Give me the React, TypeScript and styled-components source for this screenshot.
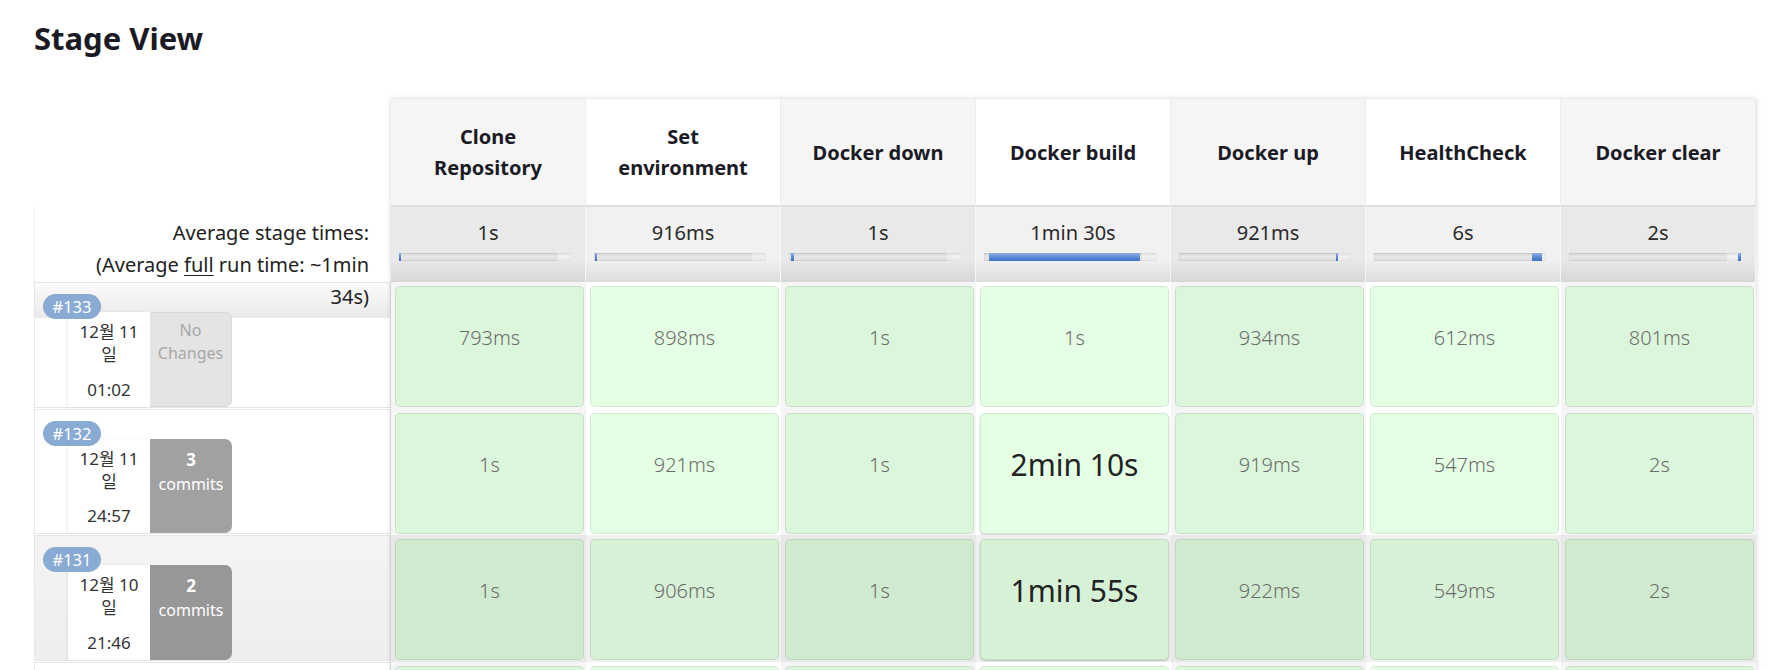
import React from "react";
import styled, { createGlobalStyle, css } from "styled-components";

const GlobalStyle = createGlobalStyle`
  html, body {
    margin: 0;
    padding: 0;
    overflow: hidden;
    background: #fff;
  }
  body {
    font-family: "Noto Sans", "Noto Sans CJK KR", sans-serif;
    color: #222;
  }
`;

type Stage = {
  name: string;
  avg: string;
  bar: [number, number];
};

type Build = {
  id: number;
  date: string;
  time: string;
  changes: number | null;
  times: string[];
  large: number[];
  shaded?: boolean;
};

const stages: Stage[] = [
  { name: "Clone Repository", avg: "1s", bar: [0, 1.2] },
  { name: "Set environment", avg: "916ms", bar: [0.5, 1.6] },
  { name: "Docker down", avg: "1s", bar: [1.3, 2.8] },
  { name: "Docker build", avg: "1min 30s", bar: [2.8, 90.7] },
  { name: "Docker up", avg: "921ms", bar: [91, 92] },
  { name: "HealthCheck", avg: "6s", bar: [92, 97.6] },
  { name: "Docker clear", avg: "2s", bar: [98, 100] },
];

const builds: Build[] = [
  {
    id: 133,
    date: "12월 11일",
    time: "01:02",
    changes: null,
    times: ["793ms", "898ms", "1s", "1s", "934ms", "612ms", "801ms"],
    large: [],
  },
  {
    id: 132,
    date: "12월 11일",
    time: "24:57",
    changes: 3,
    times: ["1s", "921ms", "1s", "2min 10s", "919ms", "547ms", "2s"],
    large: [3],
  },
  {
    id: 131,
    date: "12월 10일",
    time: "21:46",
    changes: 2,
    times: ["1s", "906ms", "1s", "1min 55s", "922ms", "549ms", "2s"],
    large: [3],
    shaded: true,
  },
];

const ROW_H = 126.5;

const Page = styled.div`
  padding-left: 34px;
`;

const Title = styled.h2`
  margin: 18px 0 41px;
  font-size: 31px;
  line-height: 40px;
  font-weight: 700;
  color: #1b1b26;
`;

const Table = styled.div`
  display: flex;
  align-items: flex-start;
`;

const LeftColumn = styled.div`
  width: 357px;
  display: flex;
  flex-direction: column;
`;

const HeaderSpacer = styled.div`
  height: 106px;
`;

const AvgLabel = styled.div`
  position: relative;
  z-index: 2;
  height: 77px;
  box-sizing: border-box;
  padding: 12px 22px 0 0;
  text-align: right;
  font-size: 20px;
  line-height: 32px;
  color: #222;
  border-left: 1px solid #f3f3f3;

  u {
    text-decoration-thickness: 1px;
    text-underline-offset: 3px;
  }
`;

const BuildRow = styled.div<{ $first?: boolean; $shaded?: boolean }>`
  height: 125.5px;
  margin-bottom: 1px;
  box-sizing: border-box;
  border: 1px solid #e6e6e6;
  padding: 11px 0 0 8px;
  display: flex;
  flex-direction: column;
  background: #fff;
  ${(p) =>
    p.$first &&
    css`
      background: linear-gradient(
        to bottom,
        #fbfbfb 0px,
        #e9e9e9 35px,
        #fff 35px
      );
    `}
  ${(p) =>
    p.$shaded &&
    css`
      background: linear-gradient(to bottom, #f4f4f4, #eeeeee);
    `}
`;

const Badge = styled.div`
  position: relative;
  z-index: 1;
  width: 58px;
  height: 25px;
  border-radius: 13px;
  background: #89aad3;
  color: #fff;
  font-size: 16.5px;
  line-height: 25px;
  text-align: center;
`;

const BuildInfo = styled.div`
  flex: 1;
  display: flex;
  margin: -7px 0 0 25px;
`;

const DateBox = styled.div`
  width: 82px;
  box-sizing: border-box;
  padding: 8px 8px 6px;
  background: #fff;
  box-shadow: -1px 0 2px rgba(0, 0, 0, 0.08);
  display: flex;
  flex-direction: column;
  justify-content: space-between;
  text-align: center;
  font-size: 17px;
  line-height: 23px;
  color: #333;
`;

const ChangesBox = styled.div<{ $empty?: boolean; $shaded?: boolean }>`
  width: 82px;
  box-sizing: border-box;
  border-radius: 0 7px 7px 0;
  text-align: center;
  font-size: 16px;
  ${(p) =>
    p.$empty
      ? css`
          padding-top: 6px;
          line-height: 23px;
          background: #e4e4e4;
          color: #a8a8a8;
          border: 1px solid #d9d9d9;
          border-left: none;
        `
      : css`
          padding-top: 8px;
          line-height: 25px;
          background: ${p.$shaded ? "#979797" : "#a1a1a1"};
          color: #fff;
        `}

  strong {
    display: block;
    font-weight: 700;
    font-size: 17px;
  }
`;

const StageGrid = styled.div`
  display: grid;
  grid-template-columns: repeat(7, 195px);
  box-shadow: 0 0 5px rgba(0, 0, 0, 0.18);
`;

const HeaderCell = styled.div<{ $alt: boolean }>`
  height: 106px;
  box-sizing: border-box;
  padding: 0 22px;
  display: flex;
  align-items: center;
  justify-content: center;
  text-align: center;
  background: ${(p) => (p.$alt ? "#ffffff" : "#f5f5f5")};
  border-right: 1px solid #ebebeb;
  font-size: 20px;
  line-height: 31px;
  font-weight: 700;
  color: #1b1b26;
`;

const AvgCell = styled.div<{ $alt: boolean }>`
  height: 77px;
  box-sizing: border-box;
  border-top: 2px solid #dedede;
  border-right: 1px solid #f6f6f6;
  padding-top: 12px;
  text-align: center;
  font-size: 20px;
  line-height: 28px;
  color: #2a2a2a;
  background: ${(p) =>
    p.$alt
      ? "linear-gradient(to bottom, #f1f1f1 0%, #f1f1f1 70%, #dcdcdc 100%)"
      : "linear-gradient(to bottom, #e9e9e9 0%, #e9e9e9 70%, #d6d6d6 100%)"};
`;

const Bar = styled.div`
  position: relative;
  margin: 6px 0 0 8px;
  width: 172px;
  height: 8px;
  background: linear-gradient(to bottom, #d2d2d2, #e8e8e8 45%, #dcdcdc);
  box-shadow: inset 0 0 0 1px rgba(0, 0, 0, 0.05);
  overflow: hidden;

  &::after {
    content: "";
    position: absolute;
    top: 0;
    bottom: 0;
    left: 91%;
    right: 0;
    background: rgba(255, 255, 255, 0.35);
    border-left: 1px solid rgba(0, 0, 0, 0.06);
  }
`;

const BarFill = styled.div`
  position: absolute;
  top: 0;
  bottom: 0;
  z-index: 1;
  min-width: 2px;
  background: linear-gradient(to bottom, #8fb0e2, #5585d2 60%, #3f72c6);
`;

const StageCell = styled.div<{ $alt: boolean; $shaded?: boolean }>`
  height: ${ROW_H}px;
  box-sizing: border-box;
  padding: 4px 2px 1.5px 4px;
  background: ${(p) =>
    p.$shaded
      ? p.$alt
        ? "#f0f0f0"
        : "#e8e8e8"
      : p.$alt
        ? "#ffffff"
        : "#f5f5f5"};
`;

const CellBox = styled.div<{ $large?: boolean }>`
  height: 100%;
  box-sizing: border-box;
  border: 1px solid rgba(0, 0, 0, 0.09);
  border-radius: 5px;
  background: rgba(0, 255, 0, 0.1);
  padding-top: 37px;
  text-align: center;
  font-size: 20px;
  font-weight: 300;
  line-height: 28px;
  color: #6c6c6c;
  ${(p) =>
    p.$large &&
    css`
      font-size: 30px;
      font-weight: 400;
      color: #222;
      box-shadow: 0 1px 2px rgba(0, 0, 0, 0.22);
    `}
`;

const BuildLabel = ({ build, first }: { build: Build; first: boolean }) => (
  <BuildRow $first={first} $shaded={build.shaded}>
    <Badge>#{build.id}</Badge>
    <BuildInfo>
      <DateBox>
        <div>{build.date}</div>
        <div>{build.time}</div>
      </DateBox>
      {build.changes === null ? (
        <ChangesBox $empty>No Changes</ChangesBox>
      ) : (
        <ChangesBox $shaded={build.shaded}>
          <strong>{build.changes}</strong>
          commits
        </ChangesBox>
      )}
    </BuildInfo>
  </BuildRow>
);

export default function App() {
  return (
    <Page>
      <GlobalStyle />
      <Title>Stage View</Title>
      <Table>
        <LeftColumn>
          <HeaderSpacer />
          <AvgLabel>
            Average stage times:
            <br />
            (Average <u>full</u> run time: ~1min
            <br />
            34s)
          </AvgLabel>
          {builds.map((b, i) => (
            <BuildLabel key={b.id} build={b} first={i === 0} />
          ))}
          {/* next build row, only its top edge shows in the frame */}
          <BuildRow />
        </LeftColumn>
        <StageGrid>
          {stages.map((s, i) => (
            <HeaderCell key={`h-${s.name}`} $alt={i % 2 === 1}>
              {s.name}
            </HeaderCell>
          ))}
          {stages.map((s, i) => (
            <AvgCell key={`a-${s.name}`} $alt={i % 2 === 1}>
              {s.avg}
              <Bar>
                <BarFill
                  style={{
                    left: `${s.bar[0]}%`,
                    width: `${s.bar[1] - s.bar[0]}%`,
                  }}
                />
              </Bar>
            </AvgCell>
          ))}
          {builds.map((b) =>
            b.times.map((t, i) => (
              <StageCell key={`${b.id}-${i}`} $alt={i % 2 === 1} $shaded={b.shaded}>
                <CellBox $large={b.large.includes(i)}>{t}</CellBox>
              </StageCell>
            ))
          )}
          {stages.map((s, i) => (
            <StageCell key={`next-${s.name}`} $alt={i % 2 === 1}>
              <CellBox $large={i === 3} />
            </StageCell>
          ))}
        </StageGrid>
      </Table>
    </Page>
  );
}
